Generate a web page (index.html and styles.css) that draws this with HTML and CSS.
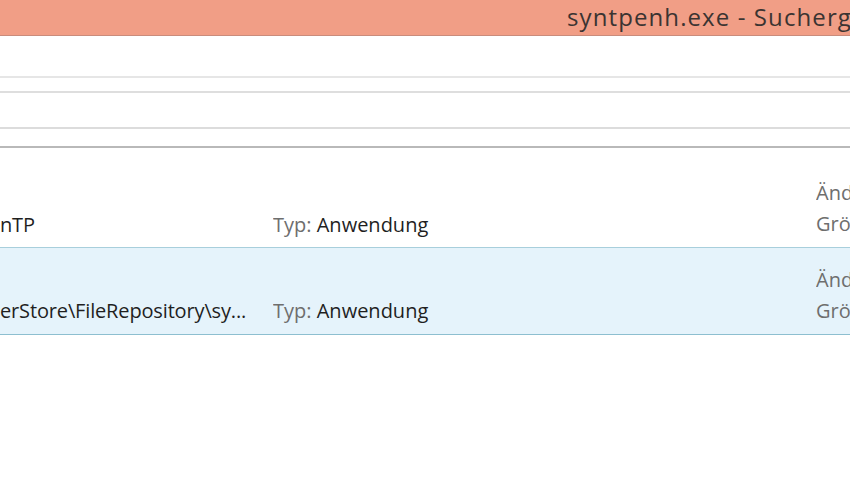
FILE: index.html
```html
<!DOCTYPE html>
<html lang="de">
<head>
<meta charset="utf-8">
<title>syntpenh.exe - Suchergebnisse</title>
<link rel="stylesheet" href="styles.css">
</head>
<body>
<div class="window">
  <header class="titlebar">
    <span class="title">syntpenh.exe - Suchergebnisse</span>
  </header>
  <div class="ribbon">
    <div class="band band-a"></div>
    <div class="band band-b"></div>
    <div class="band band-c"></div>
    <div class="band band-d"></div>
  </div>
  <div class="results">
    <div class="row">
      <div class="col name"><span class="line bottom">nTP</span></div>
      <div class="col type"><span class="line bottom"><span class="label">Typ:</span> Anwendung</span></div>
      <div class="col meta">
        <span class="line label">Änderungsdatum</span>
        <span class="line label">Größe</span>
      </div>
    </div>
    <div class="row selected">
      <div class="col name"><span class="line bottom">erStore\FileRepository\sy...</span></div>
      <div class="col type"><span class="line bottom"><span class="label">Typ:</span> Anwendung</span></div>
      <div class="col meta">
        <span class="line label">Änderungsdatum</span>
        <span class="line label">Größe</span>
      </div>
    </div>
  </div>
</div>
</body>
</html>
```

FILE: styles.css
```css
html, body {
  margin: 0;
  padding: 0;
  background: #ffffff;
}
body {
  font-family: "Open Sans", "Noto Sans", "DejaVu Sans", sans-serif;
  color: #1f1f1f;
  width: 850px;
  height: 478px;
  overflow: hidden;
}
.window {
  width: 850px;
  overflow: hidden;
}
.titlebar {
  height: 35px;
  background: #f19e86;
  border-bottom: 1px solid #c98c7c;
  box-sizing: content-box;
  padding-left: 567px;
  white-space: nowrap;
  overflow: hidden;
  display: flex;
  align-items: center;
}
.title {
  font-size: 24px;
  letter-spacing: 1.1px;
  color: #3b3432;
  line-height: 1;
  margin-top: -2px;
}
.ribbon {
  display: flex;
  flex-direction: column;
}
.band-a {
  height: 40px;
  border-bottom: 2px solid #e6e6e6;
}
.band-b {
  height: 13px;
  border-bottom: 2px solid #dedede;
}
.band-c {
  height: 34px;
  border-bottom: 2px solid #dcdcdc;
}
.band-d {
  height: 17px;
  border-bottom: 2px solid #b9b9b9;
}
.results {
  display: flex;
  flex-direction: column;
}
.row {
  display: flex;
  height: 99px;
  border-bottom: 1px solid #a8cfdc;
  font-size: 20px;
}
.row.selected {
  height: 86px;
  background: #e5f3fb;
  border-bottom: 1px solid #8dbfd0;
}
.col {
  display: flex;
  flex-direction: column;
  justify-content: flex-end;
  padding-bottom: 9px;
  white-space: nowrap;
  overflow: hidden;
}
.selected .col {
  padding-bottom: 10px;
}
.name {
  width: 273px;
  letter-spacing: -0.15px;
}
.type {
  width: 543px;
}
.meta {
  width: 34px;
  gap: 5px;
  padding-bottom: 10px;
}
.line {
  line-height: 26px;
}
.label {
  color: #6e6e6e;
}
```
